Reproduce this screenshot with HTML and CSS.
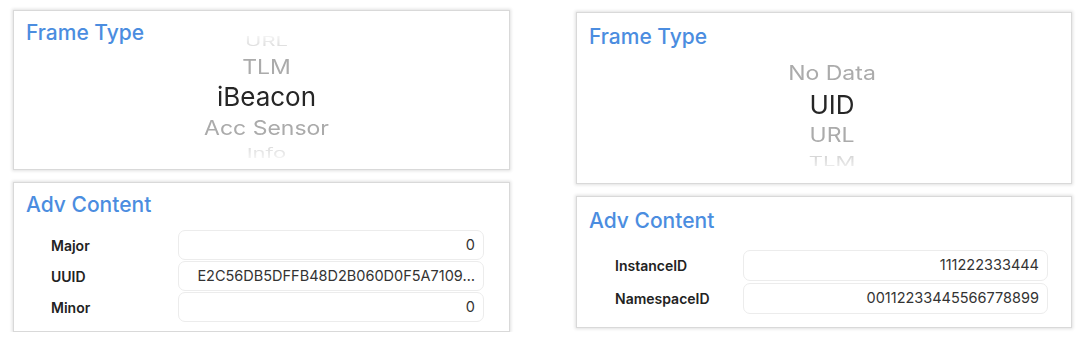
FILE: index.html
```html
<!DOCTYPE html>
<html lang="en">
<head>
  <meta charset="utf-8" />
  <meta name="viewport" content="width=device-width, initial-scale=1" />
  <title>Beacon Frame Settings</title>
  <link rel="stylesheet" href="styles.css">
</head>
<body>
  <main class="page">
    <section class="column column-ibeacon">
      <div class="card frame-card">
        <h2 class="card-title">Frame Type</h2>
        <div class="picker">
          <div class="item far">URL</div>
          <div class="item near">TLM</div>
          <div class="item selected">iBeacon</div>
          <div class="item near">Acc Sensor</div>
          <div class="item far">Info</div>
        </div>
      </div>
      <div class="card adv-card">
        <h2 class="card-title">Adv Content</h2>
        <div class="fields">
          <label class="field-label">Major</label>
          <div class="field-value">0</div>
          <label class="field-label">UUID</label>
          <div class="field-value">E2C56DB5DFFB48D2B060D0F5A7109…</div>
          <label class="field-label">Minor</label>
          <div class="field-value">0</div>
        </div>
      </div>
    </section>

    <section class="column column-uid">
      <div class="card frame-card">
        <h2 class="card-title">Frame Type</h2>
        <div class="picker">
          <div class="item near">No Data</div>
          <div class="item selected">UID</div>
          <div class="item near">URL</div>
          <div class="item far">TLM</div>
        </div>
      </div>
      <div class="card adv-card">
        <h2 class="card-title">Adv Content</h2>
        <div class="fields">
          <label class="field-label">InstanceID</label>
          <div class="field-value">111222333444</div>
          <label class="field-label">NamespaceID</label>
          <div class="field-value">00112233445566778899</div>
        </div>
      </div>
    </section>
  </main>
</body>
</html>
```

FILE: styles.css
```css
* {
  margin: 0;
  padding: 0;
  box-sizing: border-box;
}

body {
  --title-blue: #4b8de0;
  --text-dark: #222;

  background: #fff;
  font-family: Inter, 'Liberation Sans', Arial, sans-serif;
  color: var(--text-dark);
}

.page {
  display: flex;
  gap: 66px;
  padding: 10px 0 0 13px;
}

.column {
  display: flex;
  flex-direction: column;
  gap: 12px;
  width: 497px;
}

.column-uid {
  width: 496px;
  padding-top: 2px;
}

.card {
  background: #fff;
  border: 1px solid #d9d9d9;
  box-shadow: 0 0 3px 1px rgba(0, 0, 0, .12);
}

.card-title {
  font-size: 21px;
  font-weight: 500;
  line-height: 22px;
  color: var(--title-blue);
  padding: 11px 0 0 12px;
}

/* title and wheel share one grid cell, the wheel runs under the title */
.frame-card {
  display: grid;

  > * {
    grid-area: 1 / 1;
  }
}

.picker {
  display: flex;
  flex-direction: column;
  align-items: center;
  justify-content: center;
  overflow: hidden;
  -webkit-mask-image: linear-gradient(transparent, #000 18%, #000 82%, transparent);
  mask-image: linear-gradient(transparent, #000 18%, #000 82%, transparent);

  .item {
    display: flex;
    align-items: center;
    justify-content: center;
    white-space: nowrap;
  }

  .selected {
    height: 32px;
    font-size: 26px;
    color: #262626;
  }

  .near {
    height: 30px;
    font-size: 23px;
    color: #ababab;
    transform: scaleY(.86);
  }

  .far {
    height: 22px;
    font-size: 22px;
    color: #cfcfcf;
    transform: scaleY(.6);
  }
}

.column-ibeacon .frame-card {
  height: 160px;

  .picker {
    height: 134px;
    margin-top: 19px;
    padding-left: 10px;
  }
}

.column-uid .frame-card {
  height: 172px;

  .card-title {
    padding-top: 13px;
  }

  .picker {
    justify-content: flex-start;
    height: 118px;
    margin-top: 45px;
    padding-left: 16px;
    -webkit-mask-image: linear-gradient(#000 80%, transparent);
    mask-image: linear-gradient(#000 80%, transparent);
  }
}

.adv-card {
  padding-bottom: 9px;
}

.fields {
  display: grid;
  grid-template-columns: 127px 1fr;
  row-gap: 1px;
  align-items: center;
  margin: 14px 25px 0 37px;
}

.field-label {
  font-size: 14px;
  font-weight: 600;
  color: var(--text-dark);
}

.field-value {
  height: 30px;
  line-height: 28px;
  padding: 0 8px;
  border: 1px solid #ececec;
  border-radius: 7px;
  font-size: 14.5px;
  color: #333;
  text-align: right;
  white-space: nowrap;
  overflow: hidden;
}

.column-ibeacon .adv-card {
  height: 150px;
}

.column-uid .adv-card {
  height: 132px;

  .card-title {
    padding-top: 13px;
  }

  .fields {
    grid-template-columns: 128px 1fr;
    row-gap: 2px;
    margin: 18px 23px 0 38px;
  }

  .field-value {
    height: 31px;
  }
}
```
